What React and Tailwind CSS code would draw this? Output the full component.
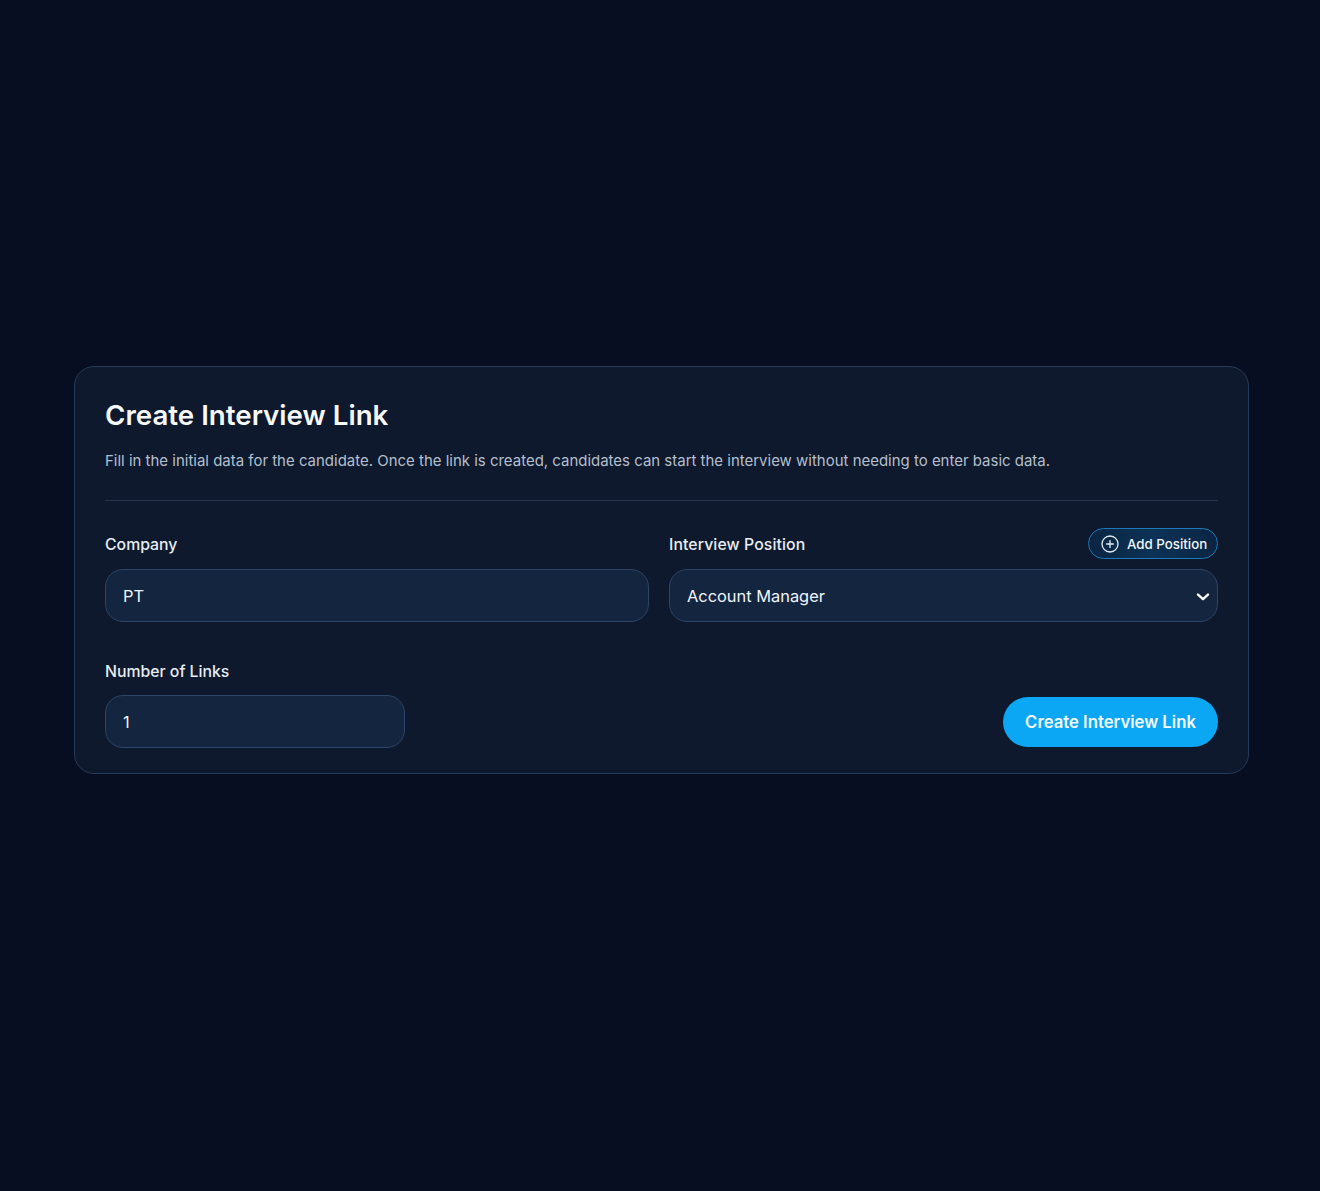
import React from "react";

function CirclePlus() {
  return (
    <svg width="18" height="18" viewBox="0 0 18 18" fill="none" stroke="#e6eef8" strokeWidth="1.3" strokeLinecap="round">
      <circle cx="9" cy="9" r="8" />
      <path d="M9 5.6v6.8M5.6 9h6.8" />
    </svg>
  );
}

function Chevron() {
  return (
    <svg width="14" height="14" viewBox="0 0 14 14" fill="none" stroke="#ffffff" strokeWidth="2.4" strokeLinecap="round" strokeLinejoin="round">
      <path d="M2 4.6 7 9.2l5-4.6" />
    </svg>
  );
}

const field = "h-[53px] rounded-[18px] border border-[#2d4568] bg-[#14253f] pl-[17px] pt-[2px] text-[16.4px] text-[#f0f4fa] flex items-center";

export default function App() {
  return (
    <div className="min-h-[1191px] bg-[#070e21] px-[74px] pt-[366px] font-['Inter',sans-serif]">
      <div className="h-[408px] w-[1175px] rounded-[20px] border border-[#263a59] bg-[#0e192d] px-[30px] pt-[30px]">
        <h1 className="text-[27.7px] leading-[36px] font-semibold text-[#f6f8fb]">Create Interview Link</h1>
        <p className="mt-[16px] text-[14.97px] leading-[24px] text-[#b4bfce]">
          Fill in the initial data for the candidate. Once the link is created, candidates can start the interview without needing to enter basic data.
        </p>
        <div className="mt-[27px] h-px bg-[#25364e]" />

        <div className="mt-[27px] grid grid-cols-[544px_549px] gap-x-[20px]">
          <div>
            <div className="flex h-[32px] items-center pt-[2px]">
              <label className="text-[15.8px] font-medium text-[#e8edf4]">Company</label>
            </div>
            <div className={`mt-[9px] ${field}`}>PT</div>
          </div>
          <div>
            <div className="flex h-[32px] items-center justify-between">
              <label className="pt-[2px] text-[15.8px] tracking-[0.1px] font-medium text-[#e8edf4]">Interview Position</label>
              <button className="flex h-[31px] w-[130px] items-center gap-[8px] self-start rounded-full border border-[#1e78b8] bg-gradient-to-r from-[#0a2542] via-[#0c3256] to-[#0a2542] pl-[12px] text-[13.3px] font-medium text-[#f1f5fa]">
                <CirclePlus />
                <span className="pt-[2px]">Add Position</span>
              </button>
            </div>
            <div className={`mt-[9px] justify-between pr-[7px] ${field}`}>
              <span>Account Manager</span>
              <Chevron />
            </div>
          </div>
        </div>

        <div className="mt-[38px] flex items-end justify-between">
          <div className="w-[300px]">
            <label className="block text-[15.8px] leading-[24px] font-medium text-[#e8edf4]">Number of Links</label>
            <div className={`mt-[11px] ${field}`}>1</div>
          </div>
          <button className="mb-[1px] h-[50px] w-[215px] rounded-full bg-[#0ba7f4] pt-[2px] text-[16.7px] font-semibold text-[#f2f9ff]">
            Create Interview Link
          </button>
        </div>
      </div>
    </div>
  );
}
